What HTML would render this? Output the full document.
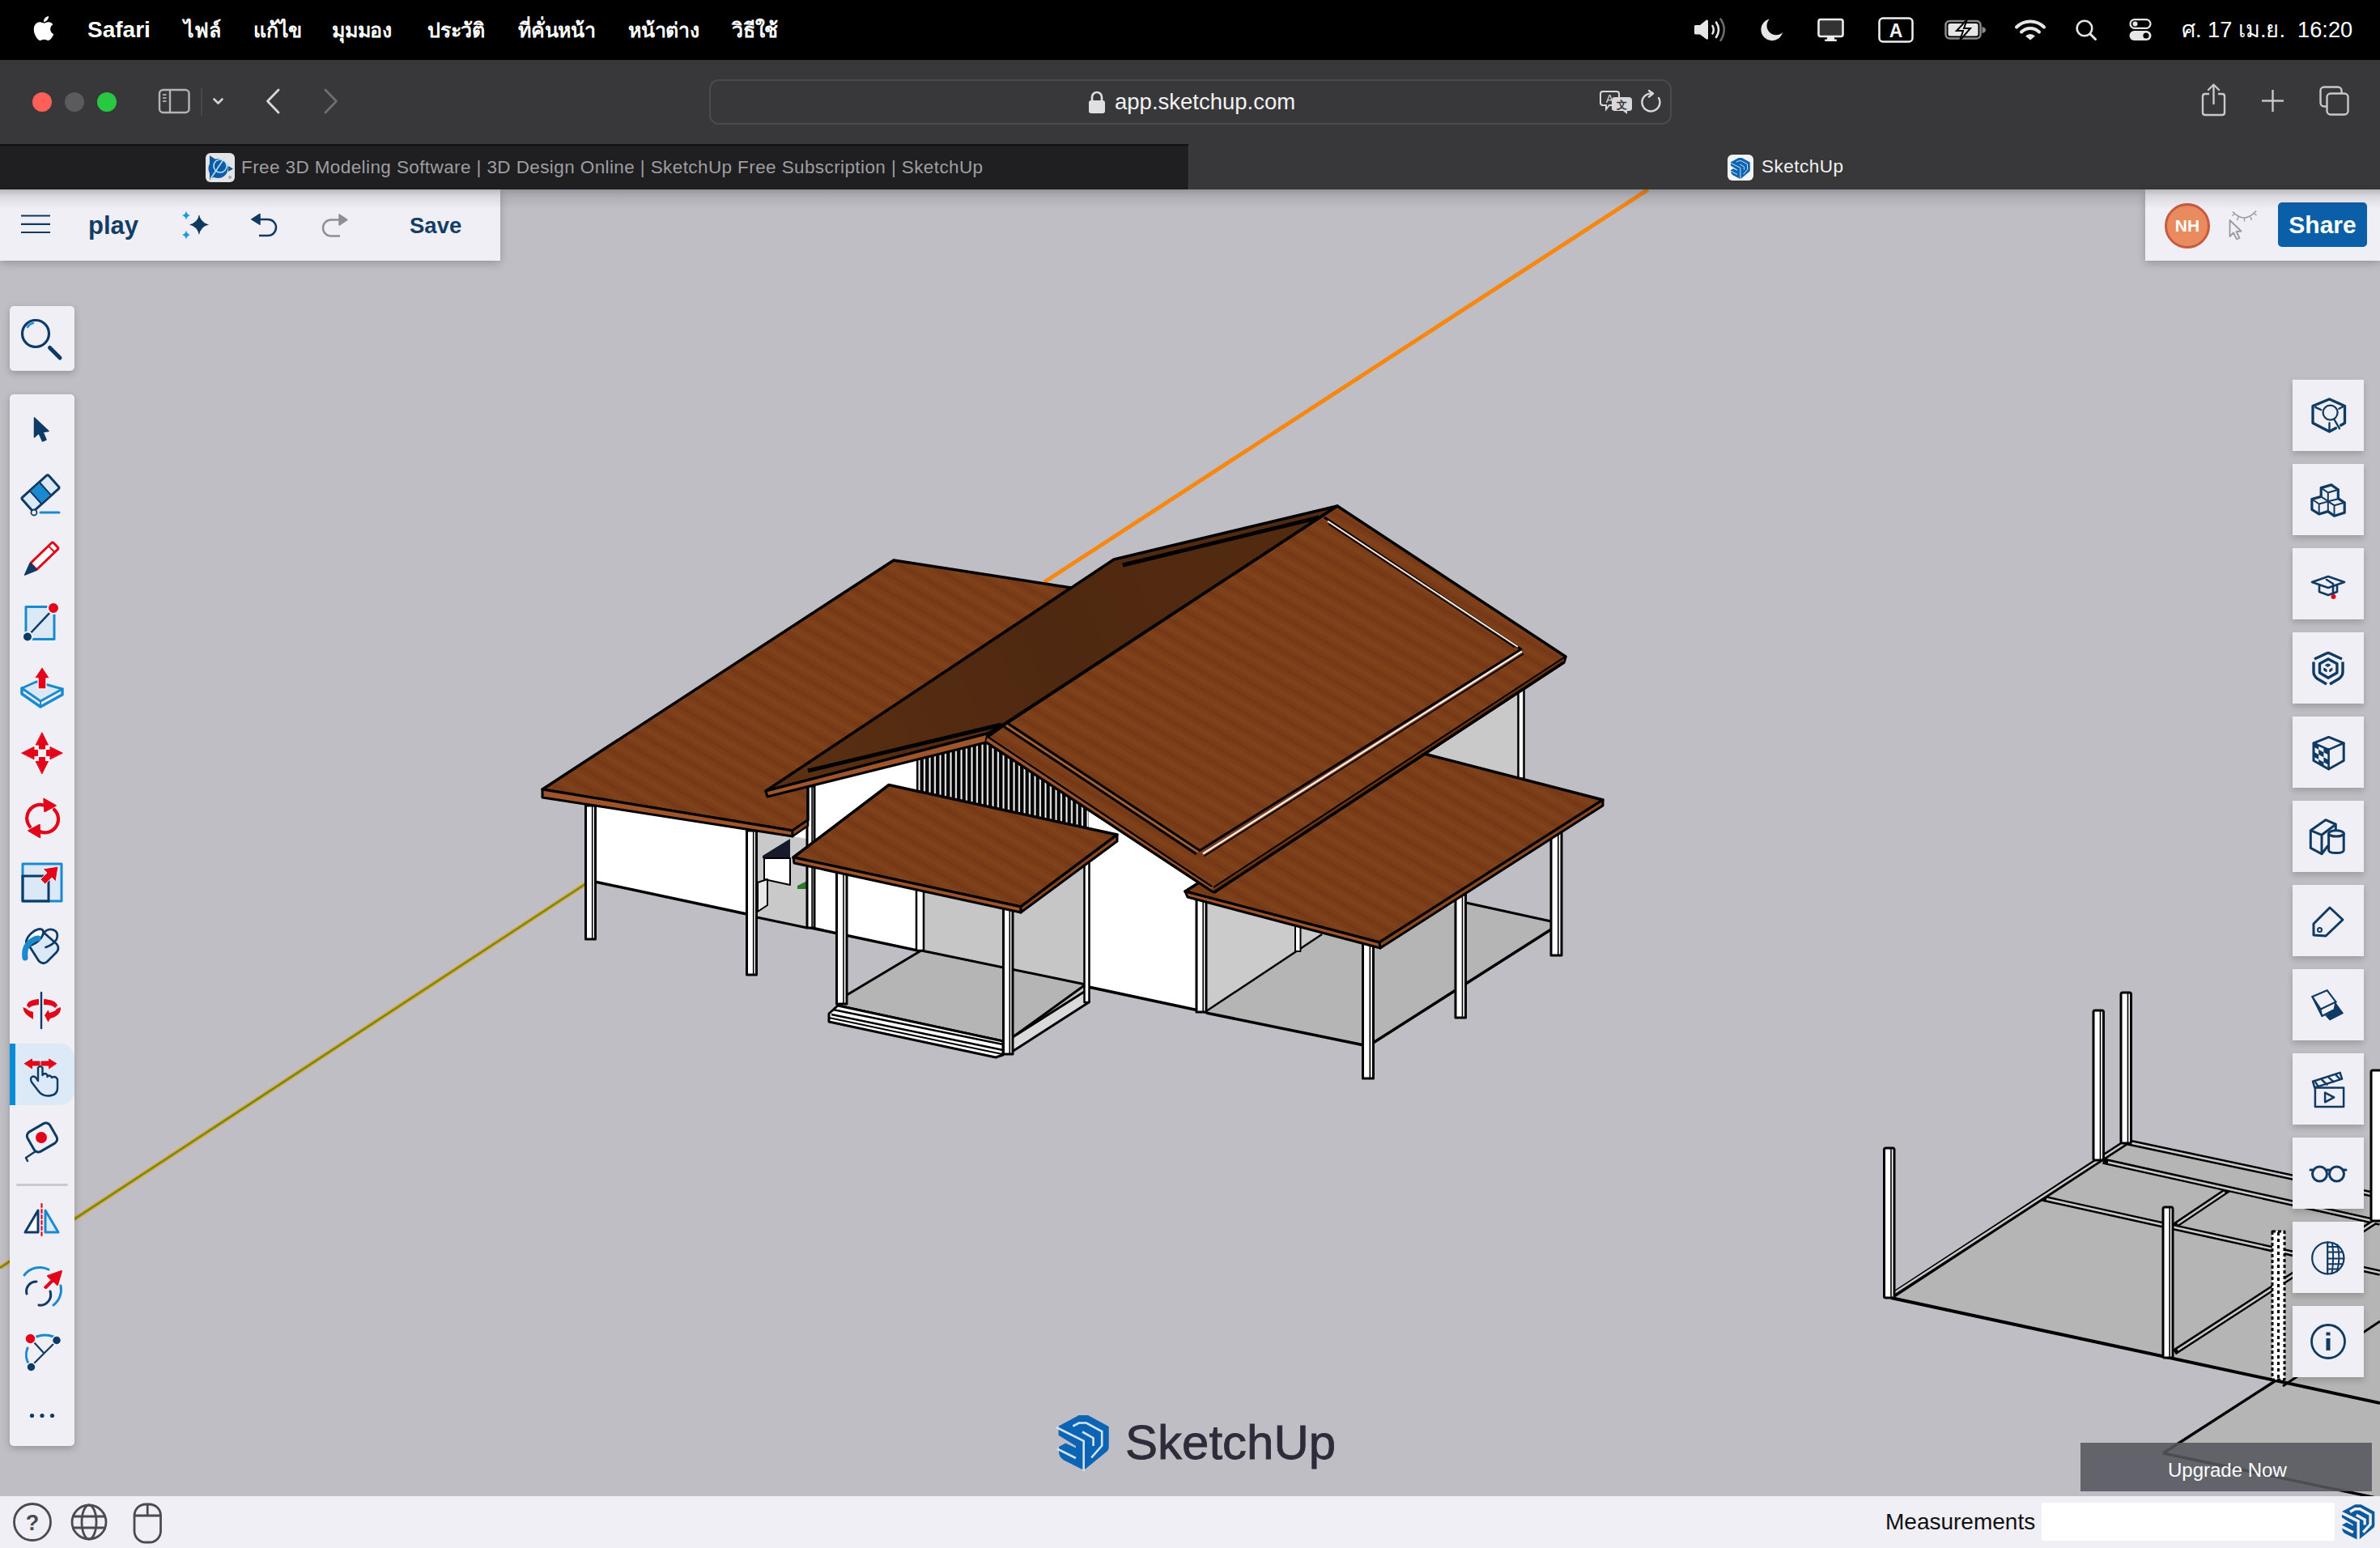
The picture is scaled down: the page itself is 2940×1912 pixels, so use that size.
<!DOCTYPE html>
<html><head><meta charset="utf-8">
<style>
*{box-sizing:border-box}
html,body{margin:0;padding:0}
body{width:2940px;height:1912px;overflow:hidden;position:relative;background:#bfbec4;font-family:"Liberation Sans",sans-serif}
.abs{position:absolute}
#menubar{position:absolute;left:0;top:0;width:2940px;height:74px;background:#000;color:#fff}
#menubar .t{position:absolute;top:17px;font-size:28px;line-height:40px;white-space:nowrap}
#menubar .th{font-weight:600;font-size:25px;letter-spacing:-0.2px}
#toolbar{position:absolute;left:0;top:74px;width:2940px;height:104px;background:#38383a}
#tabbar{position:absolute;left:0;top:178px;width:2940px;height:56px;background:#38383a}
#tab1{position:absolute;left:0;top:0;width:1469px;height:56px;background:#1f1f21;border-top:2px solid #111;border-right:1px solid #444}
#viewport{position:absolute;left:0;top:234px;width:2940px;height:1614px;background:#bfbec4;overflow:hidden}
#bottombar{position:absolute;left:0;top:1848px;width:2940px;height:64px;background:#f0eff5}
.panel{position:absolute;background:#f0eff5;box-shadow:0 3px 10px rgba(0,0,0,0.22)}
.rbtn{position:absolute;left:2832px;width:88px;height:88px;background:#f0eff5;box-shadow:0 4px 8px rgba(0,0,0,0.18)}
</style></head>
<body>
<div id="viewport">
  
  <svg class="abs" style="left:0;top:-234px" width="2940" height="1912" viewBox="0 0 2940 1912" id="model">
    <line x1="0" y1="1566" x2="729" y2="1088" stroke="#f39324" stroke-width="5"/>
    <line x1="0" y1="1566" x2="729" y2="1088" stroke="#3b9a1a" stroke-width="2"/>
    <line x1="1290" y1="719" x2="2036" y2="234" stroke="#f7870f" stroke-width="5"/>
    <!--MODEL_START--><defs>
  <pattern id="wood" patternUnits="userSpaceOnUse" width="80" height="18" patternTransform="rotate(30)">
    <rect width="80" height="18" fill="#7b3d18"/>
    <rect y="0" width="80" height="6" fill="#82431c" opacity="0.55"/>
    <rect y="10" width="80" height="4" fill="#733515" opacity="0.55"/>
  </pattern>
  <linearGradient id="darkgrad" gradientUnits="userSpaceOnUse" x1="1000" y1="960" x2="1500" y2="700">
    <stop offset="0" stop-color="#5a2f12"/>
    <stop offset="0.6" stop-color="#4e2810"/>
    <stop offset="1" stop-color="#522a10"/>
  </linearGradient>
  <pattern id="wood2" patternUnits="userSpaceOnUse" width="16" height="60">
    <rect width="16" height="60" fill="url(#darkgrad)"/>
  </pattern>
  <pattern id="slats" patternUnits="userSpaceOnUse" width="6.5" height="40" x="1132">
    <rect width="6.5" height="40" fill="#000"/>
    <rect x="2.5" width="2" height="40" fill="#fff"/>
  </pattern>
</defs>
<g stroke-linejoin="round">
<!-- far right gray wall of main block -->
<polygon points="1700,960 1880,838 1880,966 1740,926" fill="#c9c9c9"/>
<rect x="1875.5" y="850" width="7" height="112" fill="#fff" stroke="#000" stroke-width="2.5"/>

<!-- big white walls -->
<polygon points="736,990 1000,960 1218,912 1500,1100 1500,1252 730,1088" fill="#fff"/>
<polyline points="730,1088 1490,1250" fill="none" stroke="#000" stroke-width="3.5"/>

<!-- recess -->
<polygon points="935,1026 997,1036 997,1146 935,1132" fill="#c9c9c9"/>
<polygon points="942,1057 976,1036 976,1060 942,1060" fill="#161a2a"/>
<polygon points="944,1060 976,1060 976,1093 944,1086" fill="#fff" stroke="#000" stroke-width="2"/>
<polygon points="985,1094 997,1088 997,1098 985,1098" fill="#2a7a2a"/>
<polygon points="936,1090 948,1086 948,1118 936,1126" fill="#e8e8e8" stroke="#000" stroke-width="2"/>
<polyline points="935,1133 997,1146" fill="none" stroke="#000" stroke-width="3"/>

<!-- left wing posts -->
<rect x="723.5" y="995" width="12" height="165" fill="#fff" stroke="#000" stroke-width="3"/><line x1="731.7" y1="996.0" x2="731.7" y2="1159.0" stroke="#000" stroke-width="1.6"/>
<rect x="922.5" y="1026" width="12" height="178" fill="#fff" stroke="#000" stroke-width="3"/><line x1="930.7" y1="1027.0" x2="930.7" y2="1203.0" stroke="#000" stroke-width="1.6"/>
<rect x="997" y="971" width="9" height="175" fill="#fff" stroke="#000" stroke-width="3"/><line x1="1003.1" y1="972.0" x2="1003.1" y2="1145.0" stroke="#000" stroke-width="1.6"/>

<!-- gable vent -->
<polygon points="1132,938 1218,917 1345,1000 1345,1024 1132,977" fill="url(#slats)"/>

<!-- front porch interior -->
<polygon points="1142,1000 1345,1035 1345,1222 1142,1176" fill="#c6c6c6"/>
<polygon points="1251,1120 1345,1052 1345,1222 1251,1282" fill="#c6c6c6"/>
<polygon points="1138,1174 1341,1216 1251,1281 1239,1286 1035,1242 1046,1229" fill="#b5b5b5" stroke="#000" stroke-width="3"/>
<polygon points="1251,1281 1344,1222 1345,1238 1247,1301" fill="#dadada" stroke="#000" stroke-width="3"/>
<polygon points="1035,1242 1239,1286 1239,1303 1230,1306 1024,1262 1024,1252" fill="#fff" stroke="#000" stroke-width="3"/>
<polyline points="1029,1247 1239,1290" fill="none" stroke="#000" stroke-width="2.5"/>
<polyline points="1027,1253 1239,1297" fill="none" stroke="#000" stroke-width="2.5"/>
<polyline points="1024,1257 1238,1302" fill="none" stroke="#000" stroke-width="2"/>
<!-- porch posts -->
<rect x="1132" y="1095" width="9" height="79" fill="#fff" stroke="#000" stroke-width="2.5"/>
<rect x="1339.5" y="1055" width="6" height="183" fill="#fff" stroke="#000" stroke-width="2.5"/>
<rect x="1033.5" y="1070" width="12.5" height="170" fill="#fff" stroke="#000" stroke-width="3"/><line x1="1042.0" y1="1071.0" x2="1042.0" y2="1239.0" stroke="#000" stroke-width="1.6"/>
<rect x="1239.5" y="1120" width="11.5" height="182" fill="#fff" stroke="#000" stroke-width="3"/><line x1="1247.3" y1="1121.0" x2="1247.3" y2="1301.0" stroke="#000" stroke-width="1.6"/>

<!-- right porch interior -->
<polygon points="1490,1100 1705,1171 1798,1112 1798,1118 1633,1154 1490,1249" fill="#c6c6c6"/>
<polygon points="1490,1108 1600,1138 1633,1154 1490,1249" fill="#cbcbcb"/>
<polygon points="1490,1249 1633,1154 1811,1115 1916,1138 1927,1141 1697,1290 1683,1293" fill="#b5b5b5"/>
<polyline points="1490,1249 1633,1154" fill="none" stroke="#000" stroke-width="2.5"/>
<polyline points="1811,1115 1916,1138" fill="none" stroke="#000" stroke-width="3"/>
<polyline points="1490,1251 1690,1292 1927,1141" fill="none" stroke="#000" stroke-width="3.5"/>
<rect x="1600" y="1140" width="6.5" height="35" fill="#fff" stroke="#000" stroke-width="2"/>
<rect x="1478" y="1105" width="12" height="145" fill="#fff" stroke="#000" stroke-width="3"/><line x1="1486.2" y1="1106.0" x2="1486.2" y2="1249.0" stroke="#000" stroke-width="1.6"/>
<rect x="1683.5" y="1165" width="13" height="167" fill="#fff" stroke="#000" stroke-width="3"/><line x1="1692.3" y1="1166.0" x2="1692.3" y2="1331.0" stroke="#000" stroke-width="1.6"/>
<rect x="1798" y="1105" width="12.5" height="152" fill="#fff" stroke="#000" stroke-width="3"/><line x1="1806.5" y1="1106.0" x2="1806.5" y2="1256.0" stroke="#000" stroke-width="1.6"/>
<rect x="1916" y="1025" width="13" height="155" fill="#fff" stroke="#000" stroke-width="3"/><line x1="1924.8" y1="1026.0" x2="1924.8" y2="1179.0" stroke="#000" stroke-width="1.6"/>

<!-- left roof -->
<polygon points="670,975 1104,692 1323,726 950,975 998,962 998,1013 979,1026" fill="url(#wood)" stroke="#000" stroke-width="3.5"/>
<polygon points="670,975 979,1026 979,1033 670,985" fill="#a0542a" stroke="#000" stroke-width="3"/>
<polygon points="979,1026 998,1013 998,1020 979,1033" fill="#8a4620" stroke="#000" stroke-width="2.5"/>

<!-- right porch roof -->
<polygon points="1464,1101 1740,926 1980,988 1704,1164" fill="url(#wood)" stroke="#000" stroke-width="3.5"/>
<polygon points="1464,1101 1704,1164 1705,1171 1467,1108" fill="#a0542a" stroke="#000" stroke-width="3"/>
<polygon points="1704,1164 1980,988 1980,995 1705,1171" fill="#8c4a22" stroke="#000" stroke-width="3"/>

<!-- dark slope -->
<polygon points="946,977 1376,691 1652,625 1241,894 1220,906" fill="url(#darkgrad)" stroke="#000" stroke-width="3.5"/>
<polygon points="946,977 1220,906 1218,917 948,984" fill="#a0542a" stroke="#000" stroke-width="3"/>
<polyline points="998,952 1237,895" fill="none" stroke="#000" stroke-width="5"/>
<polyline points="1387,698 1630,639" fill="none" stroke="#000" stroke-width="5"/>

<!-- lit main slope -->
<polygon points="1244,893 1652,625 1934,811 1932,818 1500,1102 1497.5,1101 1218,916.5 1220,910" fill="url(#wood)" stroke="#000" stroke-width="3.5"/>
<polygon points="1220,910 1497,1095 1497.5,1101 1218,916.5" fill="#a0542a"/>
<polyline points="1220,910 1497,1095" fill="none" stroke="#000" stroke-width="2.2"/>
<polyline points="1218,916.5 1497.5,1101" fill="none" stroke="#000" stroke-width="3"/>
<polyline points="1243,895.8 1480,1052.3" fill="none" stroke="#a86a40" stroke-width="2"/>
<polyline points="1240.6,897.8 1478,1055" fill="none" stroke="#000" stroke-width="2.8"/>
<polyline points="1245.8,894 1482,1050.4 1879,802 1636,639" fill="none" stroke="#000" stroke-width="3"/>
<polyline points="1486,1054.5 1880,804.5" fill="none" stroke="#f4ece6" stroke-width="2.4"/>
<polyline points="1487.5,1057.5 1882,807.5" fill="none" stroke="#000" stroke-width="1.6"/>
<polyline points="1640,643.5 1875,799" fill="none" stroke="#f4ece6" stroke-width="2"/>
<polyline points="1641,647 1871,799.5" fill="none" stroke="#000" stroke-width="1.5"/>
<polygon points="1499,1096 1932,812 1932,818 1500,1102" fill="#6a3312"/>
<polyline points="1499,1096 1932,812" fill="none" stroke="#000" stroke-width="2"/>
<polyline points="1500,1102 1932,818" fill="none" stroke="#000" stroke-width="3.5"/>

<!-- front porch roof -->
<polygon points="1098,969.5 1380,1031 1261,1120 980,1059" fill="url(#wood)" stroke="#000" stroke-width="3.5"/>
<polygon points="980,1059 1261,1120 1261,1127 981,1066" fill="#a0542a" stroke="#000" stroke-width="3"/>
<polygon points="1261,1120 1380,1031 1380,1039 1261,1127" fill="#8c4a22" stroke="#000" stroke-width="3"/>
</g>
<!-- bottom right structure -->
<g stroke-linejoin="round" fill="none">
<polygon points="2336,1603 2628,1410 2940,1476 2940,1733" fill="#b5b5b5"/>
<polygon points="2672,1795 2810,1706 2940,1736 2940,1851" fill="#b5b5b5"/>
<g stroke="#000" stroke-width="7.5">
 <polyline points="2336,1601 2627,1410.5 2940,1477"/>
 <polyline points="2598,1434 2940,1510"/>
 <polyline points="2523,1480 2940,1572"/>
 <polyline points="2753,1469 2686,1514"/>
 <polyline points="2686,1670 2940,1505"/>
</g>
<g stroke="#c9c9c9" stroke-width="2.6">
 <polyline points="2340,1597 2627,1410.5 2940,1477"/>
 <polyline points="2604,1435.5 2940,1510"/>
 <polyline points="2528,1481 2940,1572"/>
 <polyline points="2748,1472.5 2690,1511.5"/>
 <polyline points="2690,1667.5 2940,1505"/>
</g>
<polyline points="2336,1603 2940,1733" stroke="#000" stroke-width="4"/>
<polyline points="2672,1795 2810,1706" stroke="#000" stroke-width="3.5"/>
<polyline points="2672,1795 2940,1851" stroke="#000" stroke-width="3.5"/>
<polyline points="2820,1712 2940,1632" stroke="#000" stroke-width="3"/>
<rect x="2327.5" y="1418" width="12.5" height="185" rx="2" fill="#fff" stroke="#000" stroke-width="3"/><line x1="2336" y1="1419" x2="2336" y2="1602" stroke="#000" stroke-width="1.6"/>
<rect x="2586" y="1248" width="12.5" height="185" rx="2" fill="#fff" stroke="#000" stroke-width="3"/><line x1="2594.5" y1="1249" x2="2594.5" y2="1432" stroke="#000" stroke-width="1.6"/>
<rect x="2620" y="1226" width="12.5" height="186" rx="2" fill="#fff" stroke="#000" stroke-width="3"/><line x1="2628.5" y1="1227" x2="2628.5" y2="1411" stroke="#000" stroke-width="1.6"/>
<rect x="2672" y="1491" width="12" height="186" rx="2" fill="#fff" stroke="#000" stroke-width="3"/><line x1="2680.2" y1="1492" x2="2680.2" y2="1676" stroke="#000" stroke-width="1.6"/>
<rect x="2929" y="1322" width="14" height="186" rx="2" fill="#fff" stroke="#000" stroke-width="3"/>
<rect x="2807" y="1521" width="15" height="183" fill="#fff" stroke="#000" stroke-width="3" stroke-dasharray="4 3"/>
<line x1="2814.5" y1="1522" x2="2814.5" y2="1703" stroke="#000" stroke-width="3" stroke-dasharray="4 4"/>
</g>
<!--MODEL_END-->
  </svg>
</div>

<div id="menubar">
  <svg class="abs" style="left:39px;top:18px" width="30" height="34" viewBox="0 0 24 27"><path fill="#fff" transform="translate(0,1.5)" d="M12.152 6.896c-.948 0-2.415-1.078-3.96-1.04-2.040.027-3.910 1.183-4.961 3.014-2.117 3.675-.546 9.103 1.519 12.090 1.013 1.454 2.208 3.090 3.792 3.039 1.520-.065 2.090-.987 3.935-.987 1.831 0 2.350.987 3.960.948 1.637-.026 2.676-1.480 3.676-2.948 1.156-1.688 1.636-3.325 1.662-3.415-.039-.013-3.182-1.221-3.220-4.857-.026-3.040 2.480-4.494 2.597-4.559-1.429-2.090-3.623-2.324-4.390-2.376-2-.156-3.675 1.090-4.610 1.090zM15.530 3.830c.843-1.012 1.400-2.427 1.245-3.830-1.207.052-2.662.805-3.532 1.818-.780.896-1.454 2.338-1.273 3.714 1.338.104 2.715-.688 3.559-1.701"/></svg>
  <div class="t" style="left:108px;font-weight:bold">Safari</div>
  <div class="t th" style="left:227px">ไฟล์</div>
  <div class="t th" style="left:313px">แก้ไข</div>
  <div class="t th" style="left:410px">มุมมอง</div>
  <div class="t th" style="left:528px">ประวัติ</div>
  <div class="t th" style="left:640px">ที่คั่นหน้า</div>
  <div class="t th" style="left:776px">หน้าต่าง</div>
  <div class="t th" style="left:904px">วิธีใช้</div>
  <svg class="abs" style="left:2080px;top:10px" width="600" height="54" viewBox="2080 10 600 54">
    <!-- speaker -->
    <path d="M2093 32 Q2093 31 2095 31 L2100 31 L2108 24.5 Q2110 24 2110 26 L2110 47.5 Q2110 49 2108 48.5 L2100 42.5 L2095 42.5 Q2093 42.5 2093 41 Z" fill="#e6e6e6"/>
    <path d="M2115.5 32 Q2118 36.7 2115.5 41.5" fill="none" stroke="#e6e6e6" stroke-width="2.6" stroke-linecap="round"/>
    <path d="M2120 27.5 Q2126 36.7 2120 46" fill="none" stroke="#e6e6e6" stroke-width="2.6" stroke-linecap="round"/>
    <path d="M2125.5 23.5 Q2134 36.7 2125.5 50" fill="none" stroke="#6a6a6a" stroke-width="2.6" stroke-linecap="round"/>
    <!-- moon -->
    <path d="M2186 23.5 A13.5 13.5 0 1 0 2202 40 A11 11 0 0 1 2186 23.5 Z" fill="#e6e6e6"/>
    <!-- display -->
    <rect x="2246.5" y="24" width="30" height="21" rx="2.5" fill="#333" stroke="#ececec" stroke-width="2.6"/>
    <rect x="2257" y="45" width="9" height="4" fill="#ececec"/>
    <rect x="2254" y="48.5" width="15" height="2.5" rx="1" fill="#ececec"/>
    <!-- A box -->
    <rect x="2321.5" y="22.5" width="41" height="29" rx="4.5" fill="none" stroke="#f0f0f0" stroke-width="2.5"/>
    <text x="2342" y="46" font-family="Liberation Sans" font-weight="bold" font-size="23" fill="#f0f0f0" text-anchor="middle">A</text>
    <!-- battery -->
    <rect x="2403.5" y="26" width="43" height="21.5" rx="5" fill="none" stroke="#8a8a8a" stroke-width="2.5"/>
    <rect x="2406.5" y="29" width="37" height="15.5" rx="2.5" fill="#e6e6e6"/>
    <path d="M2448.5 33 Q2453 34 2453 37 Q2453 40 2448.5 41 Z" fill="#8a8a8a"/>
    <path d="M2430 24 L2417 38 L2425 38 L2421 50 L2434 35 L2426 35 Z" fill="#e6e6e6" stroke="#000" stroke-width="2"/>
    <!-- wifi -->
    <path d="M2491 33.5 A24 24 0 0 1 2525 33.5" fill="none" stroke="#e6e6e6" stroke-width="4" stroke-linecap="round"/>
    <path d="M2497 39.5 A15.5 15.5 0 0 1 2519 39.5" fill="none" stroke="#e6e6e6" stroke-width="4" stroke-linecap="round"/>
    <path d="M2502 44.5 Q2508 39.5 2514 44.5 L2508 49.5 Z" fill="#e6e6e6"/>
    <!-- search -->
    <circle cx="2575" cy="35" r="9.3" fill="none" stroke="#e6e6e6" stroke-width="2.6"/>
    <line x1="2582" y1="42" x2="2588.5" y2="48.5" stroke="#e6e6e6" stroke-width="3" stroke-linecap="round"/>
    <!-- control center -->
    <rect x="2631.5" y="24.2" width="25" height="10.6" rx="5.3" fill="none" stroke="#e6e6e6" stroke-width="2.2"/>
    <circle cx="2637.5" cy="29.5" r="3" fill="#e6e6e6"/>
    <rect x="2630.5" y="38" width="27" height="12" rx="6" fill="#e6e6e6"/>
    <circle cx="2651" cy="44" r="3.6" fill="#000"/>
  </svg>
  <div class="t" style="left:2695px;font-size:27.2px">ศ. 17 เม.ย.&nbsp; 16:20</div>
</div>


<div id="toolbar">
  <div class="abs" style="left:40px;top:40px;width:24px;height:24px;border-radius:50%;background:#fe5f57"></div>
  <div class="abs" style="left:80px;top:40px;width:24px;height:24px;border-radius:50%;background:#5b5b5d"></div>
  <div class="abs" style="left:120px;top:40px;width:24px;height:24px;border-radius:50%;background:#28c840"></div>
  <svg class="abs" style="left:180px;top:24px" width="260" height="60" viewBox="180 98 260 60">
    <!-- sidebar icon -->
    <rect x="197" y="111" width="36.5" height="28" rx="4.5" fill="none" stroke="#b4b4b6" stroke-width="2.4"/>
    <line x1="210" y1="111" x2="210" y2="139" stroke="#b4b4b6" stroke-width="2.4"/>
    <line x1="201" y1="117" x2="205.5" y2="117" stroke="#b4b4b6" stroke-width="1.8"/>
    <line x1="201" y1="121" x2="205.5" y2="121" stroke="#b4b4b6" stroke-width="1.8"/>
    <line x1="201" y1="125" x2="205.5" y2="125" stroke="#b4b4b6" stroke-width="1.8"/>
    <line x1="249" y1="109" x2="249" y2="143" stroke="#4e4e50" stroke-width="1.5"/>
    <path d="M264.5 122.5 L269.5 127.5 L274.5 122.5" fill="none" stroke="#d2d2d4" stroke-width="2.6" stroke-linecap="round" stroke-linejoin="round"/>
    <!-- back/fwd -->
    <path d="M344 111 L330.5 125 L344 139" fill="none" stroke="#d8d8da" stroke-width="2.8" stroke-linecap="round" stroke-linejoin="round"/>
    <path d="M402 111 L415.5 125 L402 139" fill="none" stroke="#6e6e70" stroke-width="2.8" stroke-linecap="round" stroke-linejoin="round"/>
  </svg>
  <div class="abs" style="left:876px;top:24px;width:1189px;height:56px;border:2px solid #4b4b4d;border-radius:12px"></div>
  <svg class="abs" style="left:1340px;top:36px" width="30" height="32" viewBox="1340 110 30 32">
    <path d="M1349 125 L1349 120 A6 6 0 0 1 1361 120 L1361 125" fill="none" stroke="#e0e0e2" stroke-width="2.6"/>
    <rect x="1345" y="124" width="20" height="16" rx="3" fill="#e0e0e2"/>
  </svg>
  <div class="abs" style="left:1377px;top:30px;font-size:27.5px;line-height:44px;color:#f2f2f2">app.sketchup.com</div>
  <svg class="abs" style="left:1970px;top:34px" width="90" height="40" viewBox="1970 108 90 40">
    <path d="M1980 113 L1997 113 Q2000 113 2000 116 L2000 127 Q2000 130 1997 130 L1988 130 L1984 135 L1984 130 L1980 130 Q1977 130 1977 127 L1977 116 Q1977 113 1980 113 Z" fill="#38383a" stroke="#d8d8da" stroke-width="2"/>
    <text x="1988.5" y="127" font-family="Liberation Sans" font-size="14" fill="#d8d8da" text-anchor="middle">A</text>
    <path d="M1995 120 L2012 120 Q2016 120 2016 124 L2016 134 Q2016 137 2012 137 L2010 137 L2010 141 L2005 137 L1995 137 Q1991 137 1991 134 L1991 124 Q1991 120 1995 120 Z" fill="#d8d8da"/>
    <text x="2003.5" y="134" font-family="Liberation Sans" font-weight="bold" font-size="13" fill="#38383a" text-anchor="middle">文</text>
    <path d="M2049 121 A11 11 0 1 1 2041 115.5" fill="none" stroke="#d8d8da" stroke-width="2.4" stroke-linecap="round"/>
    <path d="M2037 112 L2042 115.5 L2037 119.5" fill="none" stroke="#d8d8da" stroke-width="2.4" stroke-linecap="round" stroke-linejoin="round"/>
  </svg>
  <svg class="abs" style="left:2700px;top:24px" width="220" height="60" viewBox="2700 98 220 60">
    <path d="M2729 116 L2724 116 Q2721 116 2721 119 L2721 139 Q2721 142 2724 142 L2745 142 Q2748 142 2748 139 L2748 119 Q2748 116 2745 116 L2740 116" fill="none" stroke="#c8c8ca" stroke-width="2.4"/>
    <line x1="2734.5" y1="129" x2="2734.5" y2="105" stroke="#c8c8ca" stroke-width="2.4"/>
    <path d="M2728 111 L2734.5 104.5 L2741 111" fill="none" stroke="#c8c8ca" stroke-width="2.4" stroke-linecap="round" stroke-linejoin="round"/>
    <line x1="2807.5" y1="111" x2="2807.5" y2="138" stroke="#c8c8ca" stroke-width="2.4"/>
    <line x1="2794" y1="124.5" x2="2821" y2="124.5" stroke="#c8c8ca" stroke-width="2.4"/>
    <rect x="2866.5" y="107.5" width="26" height="24" rx="4.5" fill="none" stroke="#c8c8ca" stroke-width="2.4"/>
    <rect x="2874.5" y="115.5" width="26" height="26" rx="4.5" fill="#38383a" stroke="#c8c8ca" stroke-width="2.4"/>
  </svg>
</div>


<svg width="0" height="0" style="position:absolute">
  <defs>
    <symbol id="sulogo" viewBox="0 0 78 82">
      <path d="M7.6 21.5 L32.8 7.9 L44 7.9 L69.7 22 L69.7 47.5 Q69.7 51 67 53 L40.3 74.7 L36.6 74.7 L14 63.4 Q8 59.5 8 53 L8 47 L16.3 42.4 L29 48.6 L29 46 L7.6 32.7 Z" fill="#0b65b4"/>
      <g fill="none" stroke="#d6e2ee" stroke-width="2.6" stroke-linejoin="miter">
        <path d="M5 23 L38.7 39.8 L38.7 77"/>
        <path d="M6 49.5 L29 61"/>
        <path d="M25.4 21.5 L32.8 17.5 L41.9 17.5 L61.2 28 L61.2 45.6 L48.2 60.4"/>
        <path d="M37 28.5 L50.6 36.2 L50.6 46"/>
      </g>
    </symbol>
    <symbol id="sulogo2" viewBox="0 0 78 82">
      <path d="M7.6 21.5 L32.8 7.9 L44 7.9 L69.7 22 L69.7 47.5 Q69.7 51 67 53 L40.3 74.7 L36.6 74.7 L14 63.4 Q8 59.5 8 53 L8 47 L16.3 42.4 L29 48.6 L29 46 L7.6 32.7 Z" fill="#0c5a9c"/>
      <g fill="none" stroke="#f0eff5" stroke-width="5.2" stroke-linejoin="miter">
        <path d="M4 22.5 L38.7 39.8 L38.7 78"/>
        <path d="M5 49 L29 61"/>
        <path d="M23 22 L32.8 16.5 L41.9 16.5 L61.7 27.5 L61.7 46 L48 61"/>
        <path d="M35 28 L51 37 L51 47"/>
      </g>
    </symbol>
  </defs>
</svg>
<div id="tabbar">
  <div id="tab1">
    <div class="abs" style="left:254px;top:9px;width:36px;height:36px;border-radius:6px;background:#e4e4e6"></div>
    <svg class="abs" style="left:254px;top:9px" width="36" height="36" viewBox="0 0 36 36">
      <path d="M5 3 L14 9 L5 14 Z" fill="#0d5a9a"/>
      <path d="M5 23 L14 27 L5 33 Z" fill="#0d5a9a"/>
      <path d="M28 16 L34 19.5 L28 23 Z" fill="#0d5a9a"/>
      <circle cx="15.5" cy="19" r="12" fill="#0e5ba8"/>
      <circle cx="18" cy="16" r="8" fill="none" stroke="#bfe6ff" stroke-width="1.5"/>
      <path d="M6 32 L24 5" stroke="#bfe6ff" stroke-width="1.5"/>
      <circle cx="30" cy="30" r="2" fill="#9aa"/>
    </svg>
    <div class="abs" style="left:298px;top:9px;font-size:22.5px;line-height:36px;color:#9e9ea1;white-space:nowrap;letter-spacing:0.4px">Free 3D Modeling Software | 3D Design Online | SketchUp Free Subscription | SketchUp</div>
  </div>
  <div class="abs" style="left:2134px;top:13px;width:32px;height:32px;border-radius:6px;background:#f4f4f6"></div>
  <svg class="abs" style="left:2135px;top:13.6px" width="30" height="31.5"><use href="#sulogo" width="30" height="31.5"/></svg>
  <div class="abs" style="left:2176px;top:10px;font-size:22.5px;line-height:36px;color:#f2f2f2;letter-spacing:0.5px">SketchUp</div>
</div>


<!-- top left app panel -->
<div class="panel" style="left:0;top:234px;width:618px;height:88px"></div>
<svg class="abs" style="left:0;top:234px" width="618" height="88" viewBox="0 234 618 88">
  <g stroke="#0f3a60" stroke-width="2.2" stroke-linecap="butt">
    <line x1="26" y1="266.5" x2="62" y2="266.5"/>
    <line x1="26" y1="276.8" x2="62" y2="276.8"/>
    <line x1="26" y1="287" x2="62" y2="287"/>
  </g>
  <path d="M246 265 Q248 275 258 277.5 Q248 280 246 290 Q244 280 234 277.5 Q244 275 246 265 Z" fill="#0f3a60"/>
  <path d="M230 260.5 Q231 265 235 266 Q231 267 230 271.5 Q229 267 225 266 Q229 265 230 260.5 Z" fill="#1a9ae0"/>
  <path d="M230 284.5 Q231 289 235 290 Q231 291 230 295.5 Q229 291 225 290 Q229 289 230 284.5 Z" fill="#1a9ae0"/>
  <path d="M310.8 270.8 L321 264.5 L321 277.2 Z" fill="#0f3a60" stroke="#0f3a60" stroke-width="1.5" stroke-linejoin="round"/>
  <path d="M320 271 L331 271 A10 10 0 0 1 331 291 L320 291" fill="none" stroke="#0f3a60" stroke-width="2.5"/>
  <path d="M428.8 271.5 L419 265 L419 278 Z" fill="#8e8e96" stroke="#8e8e96" stroke-width="1.5" stroke-linejoin="round"/>
  <path d="M420 271.5 L409 271.5 A10 10 0 0 0 409 291.5 L420 291.5" fill="none" stroke="#8e8e96" stroke-width="2.5"/>
</svg>
<div class="abs" style="left:109px;top:259px;font-size:31px;line-height:40px;font-weight:bold;color:#143d66">play</div>
<div class="abs" style="left:506px;top:259px;font-size:27.5px;line-height:40px;font-weight:bold;color:#143d66">Save</div>

<!-- top right panel -->
<div class="panel" style="left:2650px;top:234px;width:290px;height:88px"></div>
<div class="abs" style="left:2674px;top:251px;width:56px;height:56px;border-radius:50%;background:#e98a5f;border:3px solid #c75a3e;color:#fff;font-weight:bold;font-size:21px;line-height:50px;text-align:center">NH</div>
<svg class="abs" style="left:2745px;top:255px" width="50" height="45" viewBox="2745 255 50 45">
  <path d="M2758 261.5 Q2772.5 277 2787 260.5" fill="none" stroke="#9a9aa6" stroke-width="1.7"/>
  <g stroke="#9a9aa6" stroke-width="1.5">
  <line x1="2760" y1="264.5" x2="2757.5" y2="266.5"/>
  <line x1="2765" y1="268" x2="2763.5" y2="272"/>
  <line x1="2772.5" y1="269.5" x2="2772.5" y2="273.5"/>
  <line x1="2780" y1="268" x2="2781.5" y2="272"/>
  <line x1="2785" y1="264" x2="2787.5" y2="266"/>
  </g>
  <path d="M2754.5 272 L2754.5 292 L2759 287.5 L2763 295.5 L2766.5 294 L2762.5 286 L2768.5 285.5 Z" fill="#f0eff5" stroke="#9a9aa6" stroke-width="1.8" stroke-linejoin="round"/>
</svg>
<div class="abs" style="left:2814px;top:250px;width:110px;height:55px;border-radius:5px;background:#0b5ea8;color:#fff;font-weight:bold;font-size:30px;line-height:55px;text-align:center">Share</div>

<!-- left toolbars -->
<div class="panel" style="left:12px;top:378px;width:80px;height:80px;border-radius:5px"></div>
<div class="panel" style="left:12px;top:487px;width:80px;height:1299px;border-radius:5px"></div>
<!-- active highlight -->
<div class="abs" style="left:12px;top:1289px;width:80px;height:76px;background:#dce9f6;border-radius:0 18px 18px 0"></div>
<div class="abs" style="left:12px;top:1289px;width:7px;height:76px;background:#0a8bd6"></div>
<div class="abs" style="left:20px;top:1462px;width:64px;height:3px;background:#cacace;border-radius:2px"></div>
<svg class="abs" style="left:0;top:0" width="100" height="1800" viewBox="0 0 100 1800">
<g fill="none" stroke-linecap="round" stroke-linejoin="round">
 <!-- search -->
 <circle cx="44" cy="412" r="16.5" stroke="#0d3a66" stroke-width="3.2"/>
 <path d="M34 404 A11 11 0 0 1 41 399" stroke="#1a93dc" stroke-width="2.6"/>
 <line x1="61.5" y1="429.5" x2="74" y2="442" stroke="#0d3a66" stroke-width="5"/>
 <!-- select arrow -->
 <path d="M42.5 516 L42.5 540 L48 535 L52.5 545 L57 543 L53 533.5 L60 532.5 Z" fill="#0d3a66" stroke="#0d3a66" stroke-width="1.5"/>
 <!-- eraser -->
 <g transform="translate(50,609) rotate(-42)">
   <rect x="-22" y="-11" width="44" height="22" rx="2" fill="#dbe9f6" stroke="#0d3a66" stroke-width="3"/>
   <rect x="-8" y="-9.5" width="16" height="19" fill="#1a8ad0"/>
   <line x1="-8" y1="-10" x2="-8" y2="10" stroke="#0d3a66" stroke-width="2"/>
   <line x1="8" y1="-10" x2="8" y2="10" stroke="#0d3a66" stroke-width="2"/>
 </g>
 <circle cx="42" cy="633" r="3.5" fill="#f0eff5" stroke="#0d3a66" stroke-width="1.8"/>
 <line x1="50" y1="633" x2="73" y2="633" stroke="#1a8ad0" stroke-width="3"/>
 <!-- pencil -->
 <g transform="translate(51.5,690) rotate(-44)">
   <rect x="-14" y="-5.5" width="38" height="11" rx="2" fill="#fff" stroke="#e3061a" stroke-width="3"/>
   <line x1="17" y1="-5" x2="17" y2="5" stroke="#e3061a" stroke-width="2"/>
   <path d="M-14 -6 L-29 0 L-14 6 Z" fill="#0d3a66" stroke="#0d3a66" stroke-width="1.5"/>
 </g>
 <!-- rectangle -->
 <rect x="32" y="749.5" width="35" height="40" fill="#dbe9f6" stroke="#1a8ad0" stroke-width="3"/>
 <line x1="34" y1="786" x2="66" y2="752" stroke="#0d3a66" stroke-width="2.5"/>
 <circle cx="34" cy="786.5" r="6" fill="#0d3a66" stroke="#f0eff5" stroke-width="2"/>
 <circle cx="66" cy="751" r="7" fill="#e3061a" stroke="#f0eff5" stroke-width="2"/>
 <!-- push pull -->
 <path d="M27 850 L45 842 L77 851 L50 866 Z" fill="#dbe9f6" stroke="#1a8ad0" stroke-width="3"/>
 <path d="M27 850 L27 857 L50 873 L77 858 L77 851" stroke="#1a8ad0" stroke-width="3.5"/>
 <line x1="50" y1="866" x2="50" y2="873" stroke="#1a8ad0" stroke-width="2"/>
 <path d="M52 823 L62 838 L57 838 L57 851 L47 851 L47 838 L42 838 Z" fill="#e3061a" stroke="#f0eff5" stroke-width="1.5"/>
 <!-- move -->
 <g fill="#e3061a" stroke="#e3061a" stroke-width="1" stroke-linejoin="round">
  <path d="M52 905 L59.5 920 L55.5 920 L55.5 925 L48.5 925 L48.5 920 L44.5 920 Z"/>
  <path d="M52 955.5 L59.5 940.5 L55.5 940.5 L55.5 935.5 L48.5 935.5 L48.5 940.5 L44.5 940.5 Z"/>
  <path d="M27 930 L42 922.5 L42 926.5 L46.5 926.5 L46.5 933.5 L42 933.5 L42 937.5 Z"/>
  <path d="M77 930 L62 922.5 L62 926.5 L57.5 926.5 L57.5 933.5 L62 933.5 L62 937.5 Z"/>
 </g>
 <!-- rotate -->
 <path d="M37 1021 A16.5 16.5 0 0 1 54 994.5" stroke="#e3061a" stroke-width="4.2"/>
 <path d="M67 1000 A16.5 16.5 0 0 1 49 1027" stroke="#e3061a" stroke-width="4.2"/>
 <path d="M54 986.5 L69 995 L55 1002.5 Z" fill="#e3061a" stroke="#e3061a" stroke-width="1.5"/>
 <path d="M49.5 1034.5 L35 1026 L49 1018.5 Z" fill="#e3061a" stroke="#e3061a" stroke-width="1.5"/>
 <!-- scale -->
 <rect x="28" y="1067" width="48" height="46" fill="#dbe9f6" stroke="#1a8ad0" stroke-width="3"/>
 <path d="M28 1082 L60 1082 L60 1113" stroke="#0d3a66" stroke-width="3"/>
 <path d="M28 1082 L28 1113 L60 1113" stroke="#0d3a66" stroke-width="3"/>
 <path d="M50 1086 L58 1078 L53 1073 L72 1070 L69 1089 L64 1084 L56 1092 Z" fill="#e3061a" stroke="#f0eff5" stroke-width="1"/>
 <!-- paint bucket -->
 <path d="M34 1165 Q36 1150 52 1150 L70 1166 Q74 1171 70 1176 L58 1188 Q53 1192 48 1187 Z" fill="#dbe9f6" stroke="#0d3a66" stroke-width="2.8"/>
 <ellipse cx="43" cy="1157.5" rx="13" ry="6.5" transform="rotate(-42 43 1157.5)" fill="#fff" stroke="#0d3a66" stroke-width="2.8"/>
 <path d="M31 1183 Q29 1170 38 1163 Q43 1159 47 1159" stroke="#1a8ad0" stroke-width="7" stroke-linecap="round"/>
 <path d="M53 1154 Q58 1146 66 1148.5 Q73 1151 70 1160 Q66 1167 56.5 1170" stroke="#0d3a66" stroke-width="2.6"/>
 <!-- orbit -->
 <line x1="51" y1="1226" x2="51" y2="1270" stroke="#0d3a66" stroke-width="2.4"/>
 <path d="M33 1242 Q34 1235 48 1234 L48 1241 Q38 1242 36 1245 Z" fill="#e3061a"/>
 <path d="M54 1234 Q69 1235 71 1242 L68 1245 Q65 1241 54 1241 Z" fill="#e3061a"/>
 <path d="M28.5 1244 Q28 1252 41 1259 L41 1250 Q34 1248 33 1246 Z" fill="#e3061a"/>
 <path d="M75 1244 Q76 1254 62 1258 L59.5 1262.5 L55 1254 L59.5 1247.5 L61 1251 Q69 1249 70 1246 Z" fill="#e3061a"/>
 <!-- pan hand -->
 <path d="M47 1334 L47 1319 Q49.7 1315 52.5 1319 L52.5 1328 Q55.5 1324 58.5 1328 L58.5 1330 Q61.5 1326.5 64 1331 Q68 1328.5 71 1333 L71 1344 Q71 1353 60 1353.5 Q52 1354 47 1347 L39 1336.5 Q36.5 1331 40.5 1329.5 Q44 1329 47 1335" fill="#dce9f6" stroke="#0d3a66" stroke-width="2.4"/>
 <path d="M30.5 1313.5 L39.5 1308 L39.5 1311 L49 1311 L49 1316 L39.5 1316 L39.5 1319.5 Z" fill="#e3061a" stroke="#e3061a" stroke-width="1" stroke-linejoin="round"/>
 <path d="M69.5 1313.5 L60.5 1308 L60.5 1311 L51 1311 L51 1316 L60.5 1316 L60.5 1319.5 Z" fill="#e3061a" stroke="#e3061a" stroke-width="1" stroke-linejoin="round"/>
 <!-- tape -->
 <g transform="translate(52,1405) rotate(-30)">
  <rect x="-16" y="-14" width="32" height="28" rx="6" fill="#f0eff5" stroke="#0d3a66" stroke-width="3"/>
 </g>
 <circle cx="51" cy="1405" r="7" fill="#e3061a"/>
 <path d="M44 1422 L32 1430 L34 1434" stroke="#0d3a66" stroke-width="2.5"/>
 <!-- mirror -->
 <path d="M31 1522 L47 1495 L47 1522 Z" fill="#fff" stroke="#0d3a66" stroke-width="3"/>
 <path d="M56 1495 L72 1522 L56 1522 Z" fill="#dbe9f6" stroke="#1a8ad0" stroke-width="3"/>
 <line x1="51.5" y1="1487" x2="51.5" y2="1527" stroke="#e3061a" stroke-width="2.2" stroke-dasharray="4 3"/>
 <!-- offset/follow -->
 <path d="M30 1575 A24 24 0 0 1 60 1568" stroke="#1a8ad0" stroke-width="3"/>
 <path d="M75 1588 A24 24 0 0 1 66 1612" stroke="#1a8ad0" stroke-width="3"/>
 <path d="M33 1598 A12 12 0 0 1 45 1583" stroke="#0d3a66" stroke-width="3"/>
 <path d="M62 1595 A13 13 0 0 1 48 1612" stroke="#0d3a66" stroke-width="3"/>
 <path d="M55 1590 L64 1581 L59 1576 L76 1570 L71 1587 L66 1582 L57 1591 Z" fill="#e3061a" stroke="#e3061a" stroke-width="2"/>
 <!-- protractor -->
 <path d="M34 1665 A22 22 0 0 0 37 1687" stroke="#1a8ad0" stroke-width="3"/>
 <path d="M45 1651 A30 30 0 0 1 66 1651" stroke="#1a8ad0" stroke-width="3"/>
 <line x1="38" y1="1688" x2="70" y2="1656" stroke="#0d3a66" stroke-width="2.2"/>
 <line x1="42" y1="1658" x2="54" y2="1671" stroke="#0d3a66" stroke-width="2.2"/>
 <circle cx="37.5" cy="1653.5" r="6.5" fill="#e3061a" stroke="#f0eff5" stroke-width="1.5"/>
 <circle cx="70" cy="1655.5" r="5.5" fill="#0d3a66" stroke="#f0eff5" stroke-width="1.5"/>
 <circle cx="38.5" cy="1688.5" r="5.5" fill="#0d3a66" stroke="#f0eff5" stroke-width="1.5"/>
 <!-- dots -->
 <circle cx="39.5" cy="1748.5" r="2.6" fill="#0d3a66"/>
 <circle cx="52" cy="1748.5" r="2.6" fill="#0d3a66"/>
 <circle cx="64.5" cy="1748.5" r="2.6" fill="#0d3a66"/>
</g>
</svg>

<!-- right buttons -->
<div class="rbtn" style="top:469px"></div>
<div class="rbtn" style="top:573px"></div>
<div class="rbtn" style="top:677px"></div>
<div class="rbtn" style="top:781px"></div>
<div class="rbtn" style="top:885px"></div>
<div class="rbtn" style="top:989px"></div>
<div class="rbtn" style="top:1093px"></div>
<div class="rbtn" style="top:1197px"></div>
<div class="rbtn" style="top:1301px"></div>
<div class="rbtn" style="top:1405px"></div>
<div class="rbtn" style="top:1509px"></div>
<div class="rbtn" style="top:1613px"></div>
<svg class="abs" style="left:2832px;top:469px" width="88" height="1232" viewBox="0 0 88 1232">
<g fill="none" stroke="#0f3a63" stroke-linejoin="round" stroke-linecap="round">
 <!-- 1 hex cube search -->
 <g>
  <path d="M53.4 59.7 L45.5 64 L25 53.5 L25 32.6 L45.5 23.9 L64.5 32.6 L64.5 53.5 L59.7 56.3" stroke-width="3.3"/>
  <path d="M28.4 34.1 L35 37.2 M57.4 35.8 L62 33.5 M45.5 53.4 L45.5 63.5" stroke-width="2.4"/>
  <circle cx="46.6" cy="40.6" r="9" stroke-width="2.3"/>
  <line x1="51.7" y1="49.5" x2="58" y2="60.3" stroke-width="2.4"/>
 </g>
 <!-- 2 cubes -->
 <g transform="translate(0,104)">
  <path d="M35.2 40.4 L35.2 29.6 L47.8 25.9 L56.3 31.8 L56.3 42.6 L64.2 47.8 L64.2 60.3 L51.5 64.2 L43.8 58.6 L32.7 62 L23.9 56.3 L23.9 43.5 L35.2 40.4" stroke-width="3.2"/>
  <path d="M35.2 29.6 L43.8 35.5 L56.3 31.8 M43.8 35.5 L43.8 58.6 M23.9 43.5 L32.7 49.5 L43.2 46.6 M32.7 49.5 L32.7 62 M35.2 40.4 L43.8 46 M43.8 46.3 L56.3 43.2 M43.8 46.3 L51.5 51.2 L64.2 47.8 M51.5 51.2 L51.5 64.2" stroke-width="2"/>
 </g>
 <!-- 3 grad cap -->
 <g transform="translate(0,208)" stroke-width="2.6">
  <path d="M24 42 L44 35 L64 42 L44 49 Z"/>
  <path d="M33 46 L33 54 L44 58 L55 54 L55 46"/>
  <path d="M42 39 L50 44 L50 58"/>
  <circle cx="50.5" cy="60" r="3" fill="#e3061a" stroke="none"/>
 </g>
 <!-- 4 hex w/ cube -->
 <g transform="translate(0,312)">
  <path d="M27 33 L42 26 Q44 25 46 26 L61 33" stroke-width="3.4" stroke-linecap="butt"/>
  <path d="M26 36.5 L26 49 Q26 54 31 57.5 L42 64" stroke-width="3.4" stroke-linecap="butt"/>
  <path d="M62 36.5 L62 49 Q62 54 57 57.5 L46 64" stroke-width="3.4" stroke-linecap="butt"/>
  <path d="M44 33 L54.9 38.7 L54.9 50 L44 56.3 L33.5 50 L33.5 38.7 Z" stroke-width="3.4"/>
  <path d="M40.6 40.4 L43.8 38.9 L46.9 40.4 L43.8 42.4 Z M39 44.3 L42 46 L42 48.9 L39 47 Z M48.6 44.3 L45.8 46 L45.8 48.9 L48.6 47 Z" fill="#0f3a63" stroke-width="1"/>
 </g>
 <!-- 5 checker cube -->
 <g transform="translate(0,416)">
  <path d="M26 43.5 L32.2 46.9 L32.2 53 L26 49.6 Z M32.2 46.9 L38.4 50.3 L38.4 44.2 L32.2 40.8 Z M38.4 50.3 L44.6 53.7 L44.6 59.8 L38.4 56.4 Z M26 37.4 L32.2 40.8 L32.2 34.7 L26 32.8 Z M38.4 44.2 L44.6 47.6 L44.6 40.9 L38.4 37.5 Z M32.2 53 L38.4 56.4 L38.4 62 L32.2 58.6 Z" fill="#0f3a63" stroke="none"/>
  <path d="M44.6 25.4 L63.2 32.8 L63.2 54.5 L44.6 65 L26 54.5 L26 32.8 Z" stroke-width="3"/>
  <path d="M26 32.8 L44.6 40.9 L63.2 32.8 M44.6 40.9 L44.6 65" stroke-width="2.6"/>
 </g>
 <!-- 6 box + cylinder -->
 <g transform="translate(0,520)" stroke-width="3">
  <path d="M22.3 36.7 L40.9 23.7 L53.3 29.2 L53.3 36 M22.3 36.7 L22.3 58.4 L36 65.8 L43.4 56 M22.3 36.7 L36 42.3 L53.3 29.2 M36 42.3 L36 65.8"/>
  <path d="M44.6 40.4 L44.6 61 Q44.6 64.6 53.9 64.6 Q63.2 64.6 63.2 61 L63.2 40.4" fill="#f0eff5"/>
  <ellipse cx="53.9" cy="40.4" rx="9.3" ry="3.7" fill="#f0eff5"/>
 </g>
 <!-- 7 tag -->
 <g transform="translate(0,624)" stroke-width="3">
  <path d="M26 48 L46 28 L62 43 L41 63 L26 62 Z"/>
  <circle cx="33.5" cy="55.5" r="2.5" stroke-width="2"/>
 </g>
 <!-- 8 shadow box -->
 <g transform="translate(0,728)" stroke-width="2.2">
  <path d="M41 57.5 L46 63 L62.5 54.5 L54 43 L52 50 Z" fill="#0f3a63" stroke-width="1"/>
  <path d="M24.4 34.1 L36.4 58 L51.7 50 L53.4 40.4" fill="#f0eff5"/>
  <path d="M24.4 34.1 L42.6 26.2 L53.4 40.4 L34.7 49.5 Z" fill="#f0eff5"/>
  <path d="M34.7 49.5 L36.4 58" stroke-width="1.5"/>
  <path d="M27 38 L35 53" stroke-width="1.2"/>
 </g>
 <!-- 9 clapper -->
 <g transform="translate(0,832)" stroke-width="2.5">
  <rect x="27.9" y="42.6" width="35.2" height="23.3"/>
  <path d="M25 34.7 L58.6 23.9 L61.1 31.6 L27.3 42.4 Z"/>
  <path d="M28.4 35.8 L31.8 40.9 M36.4 33 L42.6 38.7 M44.9 30.1 L50.6 35.2 M53.4 26.7 L58.6 31.8" stroke-width="2.4"/>
  <path d="M40.1 48.6 L40.1 60.3 L51.2 54.3 Z" stroke-width="2.5"/>
 </g>
 <!-- 10 glasses -->
 <g transform="translate(0,936)" stroke-width="3">
  <circle cx="33.5" cy="45" r="9"/>
  <circle cx="54.5" cy="45" r="9"/>
  <path d="M22 40 L25 40 M42.5 40 L45.5 40 M63 40 L66 40"/>
 </g>
 <!-- 11 globe -->
 <g transform="translate(0,1040)" stroke-width="2.2">
  <circle cx="43.8" cy="44.9" r="19.6"/>
  <line x1="43.2" y1="25.3" x2="43.2" y2="64.5"/>
  <path d="M49 26 Q51.5 45 48.5 64 M55.5 28.5 Q59.5 45 55 61.5" stroke-width="2"/>
  <path d="M43.2 31 L56 31 M43.2 37.5 L61.5 37.5 M43.2 45.5 L63.3 45.5 M43.2 52.3 L61.5 52.3 M43.2 58.6 L56 58.6" stroke-width="2"/>
 </g>
 <!-- 12 info -->
 <g transform="translate(0,1144)">
  <circle cx="44" cy="44" r="20.5" stroke-width="2.8"/>
  <rect x="41.5" y="32.5" width="5" height="4" fill="#0f3a63" stroke="none"/>
  <rect x="41.5" y="40" width="5" height="15" fill="#0f3a63" stroke="none"/>
 </g>
</g>
</svg>


<!-- sketchup wordmark -->
<svg class="abs" style="left:1300px;top:1740px" width="78" height="82"><use href="#sulogo" width="78" height="82"/></svg>
<div class="abs" style="left:1390px;top:1742px;font-size:60px;line-height:80px;color:#2e2c3a;letter-spacing:0px;-webkit-text-stroke:0.8px #2e2c3a">SketchUp</div>

<div class="abs" style="left:2570px;top:1782px;width:360px;height:60px;background:rgba(86,88,94,0.88);color:#fff;font-size:24px;line-height:60px;"><span style="position:absolute;left:108px;top:4px">Upgrade Now</span></div>

<div id="bottombar">
  <svg class="abs" style="left:0;top:0" width="220" height="64" viewBox="0 1848 220 64">
    <g fill="none" stroke="#4a4a50" stroke-width="2.8">
      <circle cx="40" cy="1880" r="22.5"/>
      <circle cx="110" cy="1880" r="21"/>
      <ellipse cx="110" cy="1880" rx="9" ry="21"/>
      <line x1="89" y1="1873" x2="131" y2="1873"/>
      <line x1="89" y1="1887" x2="131" y2="1887"/>
      <rect x="166" y="1858" width="32.5" height="47" rx="14"/>
      <line x1="166" y1="1872" x2="198.5" y2="1872"/>
      <line x1="182.2" y1="1858" x2="182.2" y2="1872"/>
    </g>
    <text x="40" y="1890" font-family="Liberation Sans" font-weight="bold" font-size="27" fill="#4a4a50" text-anchor="middle">?</text>
  </svg>
  <div class="abs" style="left:2329px;top:12px;font-size:28px;line-height:40px;color:#111">Measurements</div>
  <div class="abs" style="left:2522px;top:8px;width:362px;height:47px;background:#fff"></div>
  <svg class="abs" style="left:2888.4px;top:4.8px" width="50.7" height="53.3"><use href="#sulogo2" width="50.7" height="53.3"/></svg>
</div>
<!-- top shadow overlay -->
<div class="abs" style="left:0;top:234px;width:2940px;height:24px;background:linear-gradient(rgba(55,55,62,0.3),rgba(55,55,62,0.12) 35%,rgba(55,55,62,0))"></div>

</body></html>
